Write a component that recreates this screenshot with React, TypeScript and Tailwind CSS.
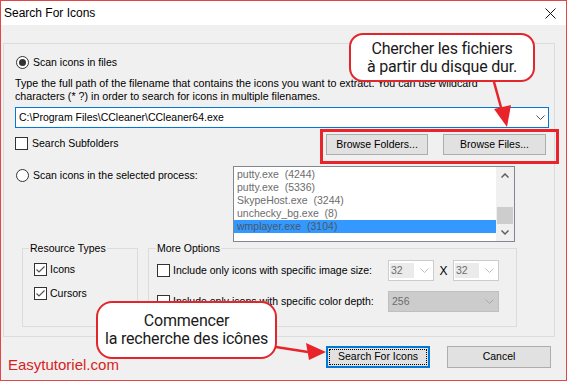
import React from "react";

const ui = "font-['Liberation_Sans',Arial,sans-serif]";
const callFont = "font-['Liberation_Sans_Narrow',Roboto,'Liberation_Sans',sans-serif]";

function Chevron({ className = "" }: { className?: string }) {
  return (
    <svg width="9" height="5" viewBox="0 0 9 5" className={className}>
      <path d="M0.5 0.5 L4.5 4.5 L8.5 0.5" fill="none" stroke="currentColor" strokeWidth="1" />
    </svg>
  );
}

function Radio({ checked }: { checked?: boolean }) {
  return (
    <span className="w-[13px] h-[13px] rounded-full border border-[#333] bg-white flex items-center justify-center shrink-0">
      {checked && <span className="w-[7px] h-[7px] rounded-full bg-[#333]" />}
    </span>
  );
}

function Check({ checked }: { checked?: boolean }) {
  return (
    <span className="w-[13px] h-[13px] border border-[#333] bg-white flex items-center justify-center shrink-0">
      {checked && (
        <svg width="11" height="11" viewBox="0 0 11 11">
          <path d="M1.5 5.5 L4 8 L9.5 2.5" fill="none" stroke="#555" strokeWidth="1.2" />
        </svg>
      )}
    </span>
  );
}

function Btn({ label, w }: { label: string; w: string }) {
  return (
    <div className={`${w} h-[21px] bg-[#e1e1e1] border border-[#adadad] flex items-center justify-center`}>
      {label}
    </div>
  );
}

const processes = [
  "putty.exe  (4244)",
  "putty.exe  (5336)",
  "SkypeHost.exe  (3244)",
  "unchecky_bg.exe  (8)",
  "wmplayer.exe  (3104)",
];

function SmallCombo() {
  return (
    <div className="w-[46px] h-[21px] border border-[#cccccc] bg-white flex items-center justify-between pl-[1px] pr-[4px]">
      <span className="w-[24px] h-[15px] bg-[#ebebeb] text-[#6d6d6d] leading-[15px] pl-[1px]">32</span>
      <Chevron className="text-[#c0c0c0]" />
    </div>
  );
}

function Callout({ lines, className }: { lines: string[]; className: string }) {
  return (
    <div
      className={`absolute bg-white border-2 border-[#e3262c] flex flex-col items-center justify-center whitespace-nowrap text-[16px] tracking-[-0.2px] leading-[18px] text-[#1a1a1a] ${callFont} ${className}`}
    >
      {lines.map((l) => (
        <span key={l}>{l}</span>
      ))}
    </div>
  );
}

export default function App() {
  return (
    <div className={`relative w-[567px] h-[381px] overflow-hidden bg-[#f0f0f0] border border-[#e04848] text-black ${ui}`}>
      {/* title bar */}
      <div className="h-[24px] bg-white flex items-center justify-between pl-[3px] pr-[10px]">
        <span className="text-[12px]">Search For Icons</span>
        <svg width="11" height="11" viewBox="0 0 11 11">
          <path d="M0.5 0.5 L10.5 10.5 M10.5 0.5 L0.5 10.5" stroke="#111" strokeWidth="1" />
        </svg>
      </div>

      {/* main group */}
      <div className="ml-[2px] mt-[18px] w-[552px] h-[294px] border border-[#dcdcdc] pl-[11px] pt-[12px] flex flex-col text-[10.5px]">
        <div className="flex items-center gap-[4px] ml-[1px] h-[13px]">
          <Radio checked />
          <span>Scan icons in files</span>
        </div>
        <p className="mt-[8px] leading-[13px] text-[10.7px]">
          Type the full path of the filename that contains the icons you want to extract. You can use wildcard
          <br />
          characters (* ?) in order to search for icons in multiple filenames.
        </p>
        <div className="mt-[4px] w-[534px] h-[21px] border border-[#0078d7] bg-white flex items-center justify-between pl-[3px] pr-[3px]">
          <span>C:\Program Files\CCleaner\CCleaner64.exe</span>
          <Chevron className="text-[#555]" />
        </div>
        <div className="mt-[6px] flex items-start pr-[8px]">
          <div className="flex items-center gap-[4px] mt-[2px]">
            <Check />
            <span>Search Subfolders</span>
          </div>
          <div className="ml-auto flex gap-[15px]">
            <Btn label="Browse Folders..." w="w-[102px]" />
            <Btn label="Browse Files..." w="w-[103px]" />
          </div>
        </div>

        <div className="mt-[11px] flex items-start">
          <div className="w-[217px] flex items-center gap-[4px] ml-[1px] mt-[2px]">
            <Radio />
            <span>Scan icons in the selected process:</span>
          </div>
          <div className="w-[282px] h-[76px] border border-[#828790] bg-white flex">
            <div className="flex-1 pt-[1px] flex flex-col">
              {processes.map((p, i) => (
                <div
                  key={p}
                  className={`h-[13px] leading-[13px] pl-[3px] whitespace-pre ${
                    i === 4 ? "bg-[#3399ff] text-[#4a5868]" : "text-[#6d6d6d]"
                  }`}
                >
                  {p}
                </div>
              ))}
            </div>
            <div className="w-[18px] bg-[#f0f0f0] flex flex-col">
              <div className="h-[17px] flex items-center justify-center">
                <svg width="8" height="5" viewBox="0 0 8 5">
                  <path d="M0.5 4.5 L4 1 L7.5 4.5" fill="none" stroke="#606060" strokeWidth="1.5" />
                </svg>
              </div>
              <div className="flex-1 flex flex-col justify-end px-[1px]">
                <div className="h-[17px] bg-[#cdcdcd]" />
              </div>
              <div className="h-[17px] flex items-center justify-center">
                <svg width="8" height="5" viewBox="0 0 8 5">
                  <path d="M0.5 0.5 L4 4 L7.5 0.5" fill="none" stroke="#606060" strokeWidth="1.5" />
                </svg>
              </div>
            </div>
          </div>
        </div>

        <div className="mt-[6px] ml-[7px] flex">
          <div className="relative w-[116px] h-[79px] border border-[#dcdcdc] pt-[14px] pl-[11px] flex flex-col">
            <span className="absolute -top-[7px] left-[6px] px-[1px] bg-[#f0f0f0] leading-[13px]">Resource Types</span>
            <div className="h-[13px] flex items-center gap-[3px]">
              <Check checked />
              <span>Icons</span>
            </div>
            <div className="mt-[11px] h-[13px] flex items-center gap-[3px]">
              <Check checked />
              <span>Cursors</span>
            </div>
          </div>
          <div className="relative ml-[10px] w-[369px] h-[79px] border border-[#dcdcdc] pt-[11px] pl-[8px] flex flex-col">
            <span className="absolute -top-[7px] left-[7px] px-[1px] bg-[#f0f0f0] leading-[13px]">More Options</span>
            <div className="h-[21px] flex items-center">
              <div className="w-[231px] flex items-center gap-[3px]">
                <Check />
                <span>Include only icons with specific image size:</span>
              </div>
              <SmallCombo />
              <span className="w-[19px] text-center text-[12px]">X</span>
              <SmallCombo />
            </div>
            <div className="mt-[10px] h-[21px] flex items-center">
              <div className="w-[231px] flex items-center gap-[3px]">
                <Check />
                <span>Include only icons with specific color depth:</span>
              </div>
              <div className="w-[111px] h-[21px] border border-[#bfbfbf] bg-[#cccccc] flex items-center justify-between pl-[3px] pr-[4px]">
                <span className="text-[#6d6d6d]">256</span>
                <Chevron className="text-[#a8a8a8]" />
              </div>
            </div>
          </div>
        </div>
      </div>

      {/* bottom row */}
      <div className="mt-[9px] flex items-start pr-[15px]">
        <span className="pl-[7px] pt-[9px] leading-[20px] text-[15px] text-[#d81e1e]">Easytutoriel.com</span>
        <div className="ml-auto flex gap-[17px] text-[10.5px]">
          <div className="w-[104px] h-[22px] bg-[#e1e1e1] border-2 border-[#0078d7] p-[1px]">
            <div className="w-full h-full border border-dotted border-black flex items-center justify-center">
              Search For Icons
            </div>
          </div>
          <div className="w-[104px] h-[22px] bg-[#e1e1e1] border border-[#adadad] flex items-center justify-center">
            Cancel
          </div>
        </div>
      </div>

      {/* annotations */}
      <div className="absolute left-[319px] top-[128px] w-[239px] h-[35px] border-[3px] border-[#e8242a]" />
      <Callout
        lines={["Chercher les fichiers", "à partir du disque dur."]}
        className="left-[348px] top-[32px] w-[186px] h-[49px] rounded-[14px]"
      />
      <Callout
        lines={["Commencer", "la recherche des icônes"]}
        className="left-[95px] top-[300px] w-[181px] h-[58px] rounded-[16px]"
      />
      <svg className="absolute left-0 top-0 pointer-events-none" width="567" height="381">
        <line x1="493" y1="81" x2="501" y2="110" stroke="#e8242a" strokeWidth="2.5" />
        <polygon points="493,108 510,104 506,126" fill="#e8242a" />
        <line x1="275" y1="346" x2="307" y2="351" stroke="#e8242a" strokeWidth="2.5" />
        <polygon points="305,342 308,359 325,351" fill="#e8242a" />
      </svg>
    </div>
  );
}
